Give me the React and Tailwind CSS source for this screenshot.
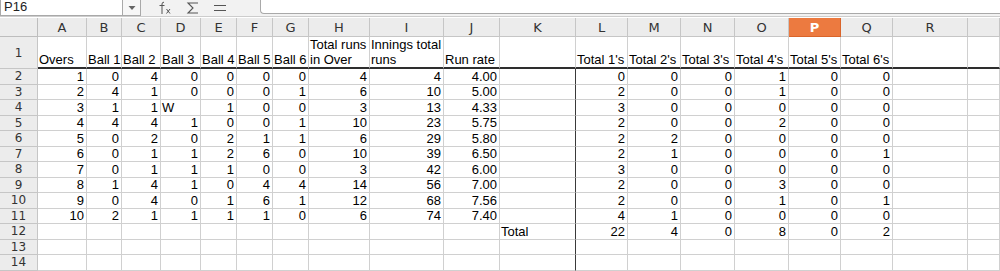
import React from 'react';

const cols = ['A', 'B', 'C', 'D', 'E', 'F', 'G', 'H', 'I', 'J', 'K', 'L', 'M', 'N', 'O', 'P', 'Q', 'R', ''];

const grid = 'grid grid-cols-[38px_49px_35px_39px_40px_36px_36px_36px_61px_74px_56px_76px_52px_53px_54px_54px_52px_52px_75px_1fr]';

const headers = ['Overs', 'Ball 1', 'Ball 2', 'Ball 3', 'Ball 4', 'Ball 5', 'Ball 6', 'Total runs in Over', 'Innings total runs', 'Run rate', '', "Total 1's", "Total 2's", "Total 3's", "Total 4's", "Total 5's", "Total 6's", '', ''];

const rows = [
    [1, 0, 4, 0, 0, 0, 0, 4, 4, '4.00', '', 0, 0, 0, 1, 0, 0],
    [2, 4, 1, 0, 0, 0, 1, 6, 10, '5.00', '', 2, 0, 0, 1, 0, 0],
    [3, 1, 1, 'W', 1, 0, 0, 3, 13, '4.33', '', 3, 0, 0, 0, 0, 0],
    [4, 4, 4, 1, 0, 0, 1, 10, 23, '5.75', '', 2, 0, 0, 2, 0, 0],
    [5, 0, 2, 0, 2, 1, 1, 6, 29, '5.80', '', 2, 2, 0, 0, 0, 0],
    [6, 0, 1, 1, 2, 6, 0, 10, 39, '6.50', '', 2, 1, 0, 0, 0, 1],
    [7, 0, 1, 1, 1, 0, 0, 3, 42, '6.00', '', 3, 0, 0, 0, 0, 0],
    [8, 1, 4, 1, 0, 4, 4, 14, 56, '7.00', '', 2, 0, 0, 3, 0, 0],
    [9, 0, 4, 0, 1, 6, 1, 12, 68, '7.56', '', 2, 0, 0, 1, 0, 1],
    [10, 2, 1, 1, 1, 1, 0, 6, 74, '7.40', '', 4, 1, 0, 0, 0, 0],
    ['', '', '', '', '', '', '', '', '', '', 'Total', 22, 4, 0, 8, 0, 2],
    [],
    [],
];

const isText = (v) => typeof v === 'string' && v !== '' && isNaN(Number(v));

const Toolbar = () => (
    <div className="flex h-[17px] items-stretch border-b border-[#cdcdcd] bg-[#f2f2f2]">
        <div className="flex h-[16px] w-[123px] items-end border border-t-0 border-[#a9a9a9] bg-white pb-[1px] pl-[3px] text-[13px] leading-[14px] text-[#222]">
            P16
        </div>
        <div className="flex h-[16px] w-[18px] items-center justify-center border border-l-0 border-t-0 border-[#a9a9a9] bg-[#f7f7f7]">
            <svg width="8" height="6" viewBox="0 0 8 6">
                <path d="M0.5 1 L7.5 1 L4 5 Z" fill="#666" />
            </svg>
        </div>
        <div className="flex w-[110px] items-center gap-[12px] pl-[17px]">
            <svg width="16" height="14" viewBox="0 0 16 14">
                <path d="M4 13 V3 Q4 1.2 6 1.2 M1.5 4.5 H6.5" stroke="#555" strokeWidth="1" fill="none" />
                <path d="M8.5 8 L12 12.5 M12 8 L8.5 12.5" stroke="#555" strokeWidth="1" fill="none" />
            </svg>
            <svg width="14" height="14" viewBox="0 0 14 14">
                <path d="M12 2 H2 L7 7 L2 12 H12" stroke="#555" strokeWidth="1.1" fill="none" />
            </svg>
            <svg width="16" height="14" viewBox="0 0 16 14">
                <path d="M2 4.5 H14 M2 9.5 H14" stroke="#555" strokeWidth="1.1" fill="none" />
            </svg>
        </div>
        <div className="ml-[9px] h-[14px] flex-1 rounded-bl-[4px] border border-r-0 border-t-0 border-[#a9a9a9] bg-white" />
    </div>
);

const HeaderRow = () => (
    <div className={`${grid} mt-[1px] h-[19px]`}>
        <div className="border-b border-r border-[#bdbdbd] bg-[#ececec]" />
        {cols.map((c, i) => (
            <div
                key={i}
                className={
                    c === 'P'
                        ? 'flex items-center justify-center border-b border-r border-[#d9642a] bg-[#ec7a40] text-[13px] leading-[15px] font-bold text-white'
                        : 'flex items-center justify-center border-b border-r border-[#c6c6c6] bg-[#ececec] text-[13px] leading-[15px] text-[#333]'
                }
                style={{ fontFamily: '"DejaVu Sans", sans-serif' }}
            >
                {c}
            </div>
        ))}
    </div>
);

const RowHead = ({ n, tall }) => (
    <div
        className={`flex items-center justify-center border-b border-r border-[#c6c6c6] bg-[#ececec] text-[12px] leading-[14px] text-[#333] ${tall ? 'h-[32px]' : 'h-[15.5px]'}`}
        style={{ fontFamily: '"DejaVu Sans", sans-serif' }}
    >
        {n}
    </div>
);

export default function App() {
    return (
        <div className="h-[271px] w-[1000px] overflow-hidden bg-white" style={{ fontFamily: '"Liberation Sans", Arial, sans-serif' }}>
            <Toolbar />
            <HeaderRow />

            {/* row 1: wrapped titles, bottom aligned */}
            <div className={grid}>
                <RowHead n={1} tall />
                {headers.map((h, i) => (
                    <div
                        key={i}
                        className="flex h-[32px] items-end overflow-hidden border-b-2 border-r border-b-[#2e2e2e] border-r-[#d0d0d0] pl-[1px] text-[13px] leading-[15px] text-black"
                    >
                        <span className="block">{h}</span>
                    </div>
                ))}
            </div>

            {rows.map((r, ri) => (
                <div key={ri} className={grid}>
                    <RowHead n={ri + 2} />
                    {cols.map((_, ci) => {
                        const v = r[ci] ?? '';
                        const text = isText(v);
                        return (
                            <div
                                key={ci}
                                className={`flex h-[15.5px] items-end whitespace-nowrap border-b border-r border-[#d0d0d0] text-[13px] leading-[14px] text-black ${
                                    text ? 'justify-start pl-[1px]' : 'justify-end pr-[2px]'
                                } ${ci === 10 ? 'border-r-[#3a3a3a]' : ''}`}
                            >
                                {v}
                            </div>
                        );
                    })}
                </div>
            ))}
        </div>
    );
}
